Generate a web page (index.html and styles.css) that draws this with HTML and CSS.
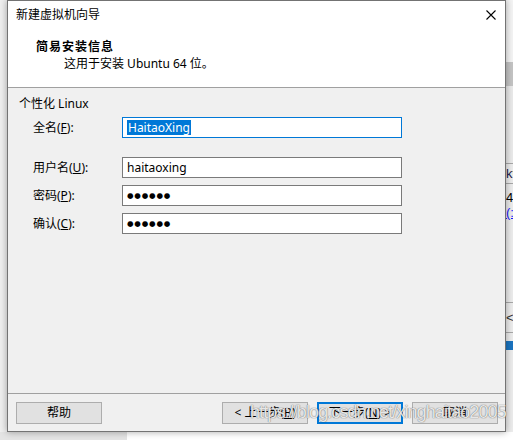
FILE: index.html
```html
<!DOCTYPE html>
<html lang="zh-CN">
<head>
<meta charset="utf-8">
<title>新建虚拟机向导</title>
<link rel="stylesheet" href="styles.css">
</head>
<body>
<div class="screen">
  <div class="left-bg"></div>

  <div class="dialog">
    <div class="titlebar">
      <span class="title">新建虚拟机向导</span>
      <svg class="close" width="10" height="10" viewBox="0 0 10 10"><path d="M0.5 0.5L9.5 9.5M9.5 0.5L0.5 9.5" stroke="#000" stroke-width="1.1" fill="none"/></svg>
    </div>
    <div class="header">
      <div class="h-title">简易安装信息</div>
      <div class="h-sub">这用于安装 Ubuntu 64 位。</div>
    </div>
    <div class="sep"></div>
    <div class="content">
      <div class="group-title">个性化 Linux</div>
      <div class="form">
        <div class="row row-first">
          <span class="label">全名(<u>F</u>):</span>
          <div class="field focused"><span class="sel">HaitaoXing</span></div>
        </div>
        <div class="row">
          <span class="label">用户名(<u>U</u>):</span>
          <div class="field">haitaoxing</div>
        </div>
        <div class="row">
          <span class="label">密码(<u>P</u>):</span>
          <div class="field"><span class="dots">●●●●●●</span></div>
        </div>
        <div class="row">
          <span class="label">确认(<u>C</u>):</span>
          <div class="field"><span class="dots">●●●●●●</span></div>
        </div>
      </div>
    </div>
    <div class="sep"></div>
    <div class="footer">
      <button class="btn">帮助</button>
      <div class="btn-group">
        <button class="btn">&lt; 上一步(<u>B</u>)</button>
        <button class="btn btn-default">下一步(<u>N</u>) &gt;</button>
        <button class="btn">取消</button>
      </div>
    </div>
  </div>

  <div class="strip">
    <div class="s-top"></div>
    <div class="s-band"></div>
    <div class="s-gap"></div>
    <div class="s-row"><span class="k">k</span><span class="t">t</span></div>
    <div class="s-text">4.</div>
    <div class="s-text s-link">(:</div>
    <div class="s-gap2"></div>
    <div class="s-row2">&lt;</div>
    <div class="s-gap3"></div>
    <div class="s-blue"></div>
    <div class="s-rest"></div>
  </div>

  <div class="bottom">
    <div class="b-left"></div>
    <div class="b-right">Step 4: cd /etc/apt/</div>
  </div>

  <div class="watermark">https://blog.csdn.net/xinghaitao2005</div>
</div>
</body>
</html>
```

FILE: styles.css
```css
html, body {
  margin: 0;
  padding: 0;
}
body {
  width: 513px;
  height: 440px;
  overflow: hidden;
  background: #f0f0f0;
  font-family: "Noto Sans", "Noto Sans CJK SC", sans-serif;
  font-size: 12px;
  color: #000;
}
.screen {
  position: relative;
  display: grid;
  grid-template-columns: 7px 499px 7px;
  grid-template-rows: 432px 8px;
  width: 513px;
  height: 440px;
  overflow: hidden;
}
.left-bg {
  background: #efefef;
}

/* dialog */
.dialog {
  position: relative;
  z-index: 1;
  box-sizing: border-box;
  border: 1px solid #737373;
  background: #f0f0f0;
  box-shadow: 0 0 7px rgba(0, 0, 0, 0.35);
  display: flex;
  flex-direction: column;
}
.titlebar {
  height: 30px;
  background: #fff;
  display: flex;
  align-items: center;
  justify-content: space-between;
  padding: 0 9px 0 8px;
}
.title {
  line-height: 30px;
  margin-top: -2px;
}
.close {
  display: block;
  margin-top: -2px;
}
.header {
  box-sizing: border-box;
  height: 56px;
  background: #fff;
  padding: 7px 0 0 28px;
}
.h-title {
  font-weight: bold;
  line-height: 17px;
  letter-spacing: 1px;
}
.h-sub {
  line-height: 18px;
  padding-left: 28px;
}
.sep {
  height: 1px;
  background: #a0a0a0;
}
.content {
  flex: 1;
  padding: 8px 0 0 11px;
}
.group-title {
  line-height: 16px;
}
.form {
  margin: 5px 0 0 14px;
  display: flex;
  flex-direction: column;
  gap: 7px;
}
.row {
  display: grid;
  grid-template-columns: 89px 280px;
  align-items: center;
  height: 21px;
}
.row-first {
  margin-bottom: 12px;
}
.label {
  line-height: 16px;
}
.field {
  box-sizing: border-box;
  height: 21px;
  border: 1px solid #7a7a7a;
  background: #fff;
  padding-left: 4px;
  line-height: 19px;
  display: flex;
  align-items: center;
}
.field.focused {
  border-color: #0078d7;
}
.sel {
  background: #0078d7;
  color: #fff;
  line-height: 15px;
  padding: 0 1px 0 1px;
}
.dots {
  font-family: "DejaVu Sans", sans-serif;
  font-size: 7.5px;
  letter-spacing: 0.8px;
  line-height: 19px;
}

/* footer */
.footer {
  height: 37px;
  box-sizing: border-box;
  padding: 8px 7px 0 8px;
  display: flex;
  align-items: flex-start;
  justify-content: space-between;
}
.btn-group {
  display: flex;
  gap: 9px;
}
.btn {
  box-sizing: border-box;
  width: 86px;
  height: 22px;
  margin: 0;
  padding: 0;
  border: 1px solid #adadad;
  background: #e1e1e1;
  font-family: "Noto Sans", "Noto Sans CJK SC", sans-serif;
  font-size: 12px;
  color: #000;
  line-height: 18px;
}
.btn-default {
  border: 2px solid #0078d7;
}

/* right strip: window behind */
.strip {
  background: #e6e6e6;
  overflow: hidden;
  display: flex;
  flex-direction: column;
  font-family: "Liberation Sans", sans-serif;
  font-size: 13px;
}
.s-top { height: 62px; background: #f4f4f4; flex: none; }
.s-band { height: 24px; background: #c4c4c4; flex: none; }
.s-gap { height: 77px; background: #eaeaea; flex: none; }
.s-row {
  flex: none;
  height: 21px;
  box-sizing: border-box;
  border-top: 1px solid #a8a8a8;
  border-bottom: 1px solid #a8a8a8;
  line-height: 19px;
  white-space: nowrap;
  background: #ececec;
}
.s-row .k { color: #1a1a4a; }
.s-row .t { color: #8a4a10; }
.s-text {
  flex: none;
  line-height: 15px;
  white-space: nowrap;
  background: #ececec;
}
.s-row + .s-text { padding-top: 6px; }
.s-link {
  color: #1a1aff;
  text-decoration: underline;
}
.s-gap2 { flex: none; height: 82px; background: #ececec; }
.s-row2 {
  flex: none;
  height: 31px;
  box-sizing: border-box;
  border-top: 1px solid #a8a8a8;
  border-bottom: 1px solid #a8a8a8;
  line-height: 29px;
  background: #ececec;
  color: #333;
}
.s-gap3 { flex: none; height: 8px; background: #ececec; }
.s-blue { flex: none; height: 9px; background: #1a74c0; }
.s-rest { flex: 1; background: #ececec; }

/* bottom: page behind */
.bottom {
  grid-column: 1 / 4;
  display: flex;
  overflow: hidden;
}
.b-left {
  width: 127px;
  background: #e4e4e4;
  flex: none;
}
.b-right {
  flex: 1;
  background: #fff;
  padding-left: 146px;
  font-family: "Liberation Sans", sans-serif;
  font-size: 15px;
  line-height: 16px;
  padding-top: 6px;
  color: #222;
  white-space: nowrap;
}

/* CSDN watermark lying over the dialog */
.watermark {
  position: absolute;
  z-index: 2;
  left: 250px;
  top: 401px;
  font-family: "Liberation Sans", sans-serif;
  font-size: 18px;
  letter-spacing: -0.9px;
  line-height: 22px;
  color: rgba(255, 255, 255, 0.85);
  text-shadow: 0 0 1px rgba(60, 60, 60, 0.7), 0 0 1px rgba(60, 60, 60, 0.4);
  white-space: nowrap;
  pointer-events: none;
}
```
